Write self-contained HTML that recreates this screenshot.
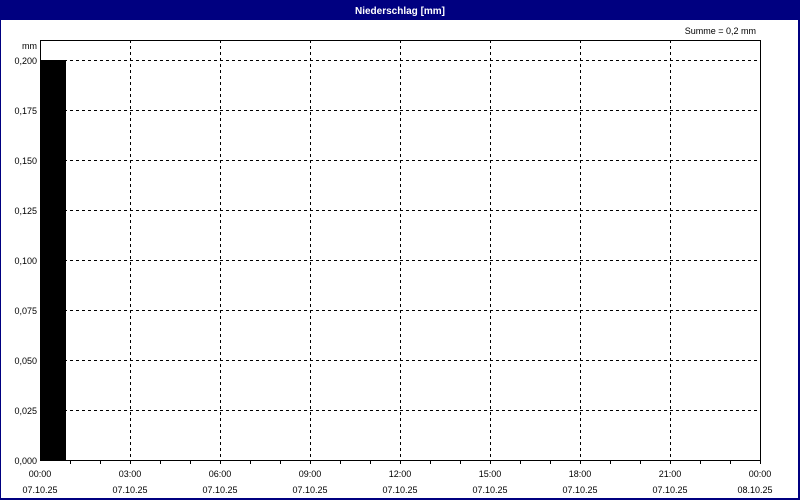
<!DOCTYPE html>
<html><head><style>
html,body{margin:0;padding:0;background:#fff;}
svg{display:block;}
text{font-family:"Liberation Sans",sans-serif;font-size:9px;fill:#000;}
</style></head><body>
<svg width="800" height="500" xmlns="http://www.w3.org/2000/svg" shape-rendering="crispEdges">
<rect x="0" y="0" width="800" height="500" fill="#fff"/>
<rect x="0.5" y="0.5" width="799" height="499" fill="none" stroke="#000080" stroke-width="1"/>
<rect x="1" y="498" width="798" height="1" fill="#000080"/>
<rect x="798" y="0" width="1" height="500" fill="#000080"/>
<rect x="0" y="0" width="800" height="20" fill="#000080"/>
<text x="400" y="14" text-anchor="middle" style="fill:#fff;font-weight:bold;font-size:10px">Niederschlag [mm]</text>
<text x="756" y="34" text-anchor="end">Summe = 0,2 mm</text>
<text x="37" y="49" text-anchor="end">mm</text>
<g stroke="#000" stroke-width="1" stroke-dasharray="3,3">
<line x1="40" y1="60.5" x2="760" y2="60.5"/>
<line x1="40" y1="110.5" x2="760" y2="110.5"/>
<line x1="40" y1="160.5" x2="760" y2="160.5"/>
<line x1="40" y1="210.5" x2="760" y2="210.5"/>
<line x1="40" y1="260.5" x2="760" y2="260.5"/>
<line x1="40" y1="310.5" x2="760" y2="310.5"/>
<line x1="40" y1="360.5" x2="760" y2="360.5"/>
<line x1="40" y1="410.5" x2="760" y2="410.5"/>
<line x1="130.5" y1="40" x2="130.5" y2="460"/>
<line x1="220.5" y1="40" x2="220.5" y2="460"/>
<line x1="310.5" y1="40" x2="310.5" y2="460"/>
<line x1="400.5" y1="40" x2="400.5" y2="460"/>
<line x1="490.5" y1="40" x2="490.5" y2="460"/>
<line x1="580.5" y1="40" x2="580.5" y2="460"/>
<line x1="670.5" y1="40" x2="670.5" y2="460"/>
</g>
<rect x="41" y="60" width="25" height="400" fill="#000"/>
<rect x="40.5" y="40.5" width="720" height="420" fill="none" stroke="#000"/>
<g stroke="#000">
<path d="M70.5 460v4M100.5 460v4M130.5 460v4M160.5 460v4M190.5 460v4M220.5 460v4M250.5 460v4M280.5 460v4M310.5 460v4M340.5 460v4M370.5 460v4M400.5 460v4M430.5 460v4M460.5 460v4M490.5 460v4M520.5 460v4M550.5 460v4M580.5 460v4M610.5 460v4M640.5 460v4M670.5 460v4M700.5 460v4M730.5 460v4M760.5 460v4"/>
</g>
<g text-anchor="end">
<text x="37" y="64">0,200</text>
<text x="37" y="114">0,175</text>
<text x="37" y="164">0,150</text>
<text x="37" y="214">0,125</text>
<text x="37" y="264">0,100</text>
<text x="37" y="314">0,075</text>
<text x="37" y="364">0,050</text>
<text x="37" y="414">0,025</text>
<text x="37" y="464">0,000</text>
</g>
<g text-anchor="middle">
<text x="40" y="477">00:00</text><text x="40" y="493">07.10.25</text>
<text x="130" y="477">03:00</text><text x="130" y="493">07.10.25</text>
<text x="220" y="477">06:00</text><text x="220" y="493">07.10.25</text>
<text x="310" y="477">09:00</text><text x="310" y="493">07.10.25</text>
<text x="400" y="477">12:00</text><text x="400" y="493">07.10.25</text>
<text x="490" y="477">15:00</text><text x="490" y="493">07.10.25</text>
<text x="580" y="477">18:00</text><text x="580" y="493">07.10.25</text>
<text x="670" y="477">21:00</text><text x="670" y="493">07.10.25</text>
<text x="760" y="477">00:00</text><text x="755" y="493">08.10.25</text>
</g>
</svg>
</body></html>
